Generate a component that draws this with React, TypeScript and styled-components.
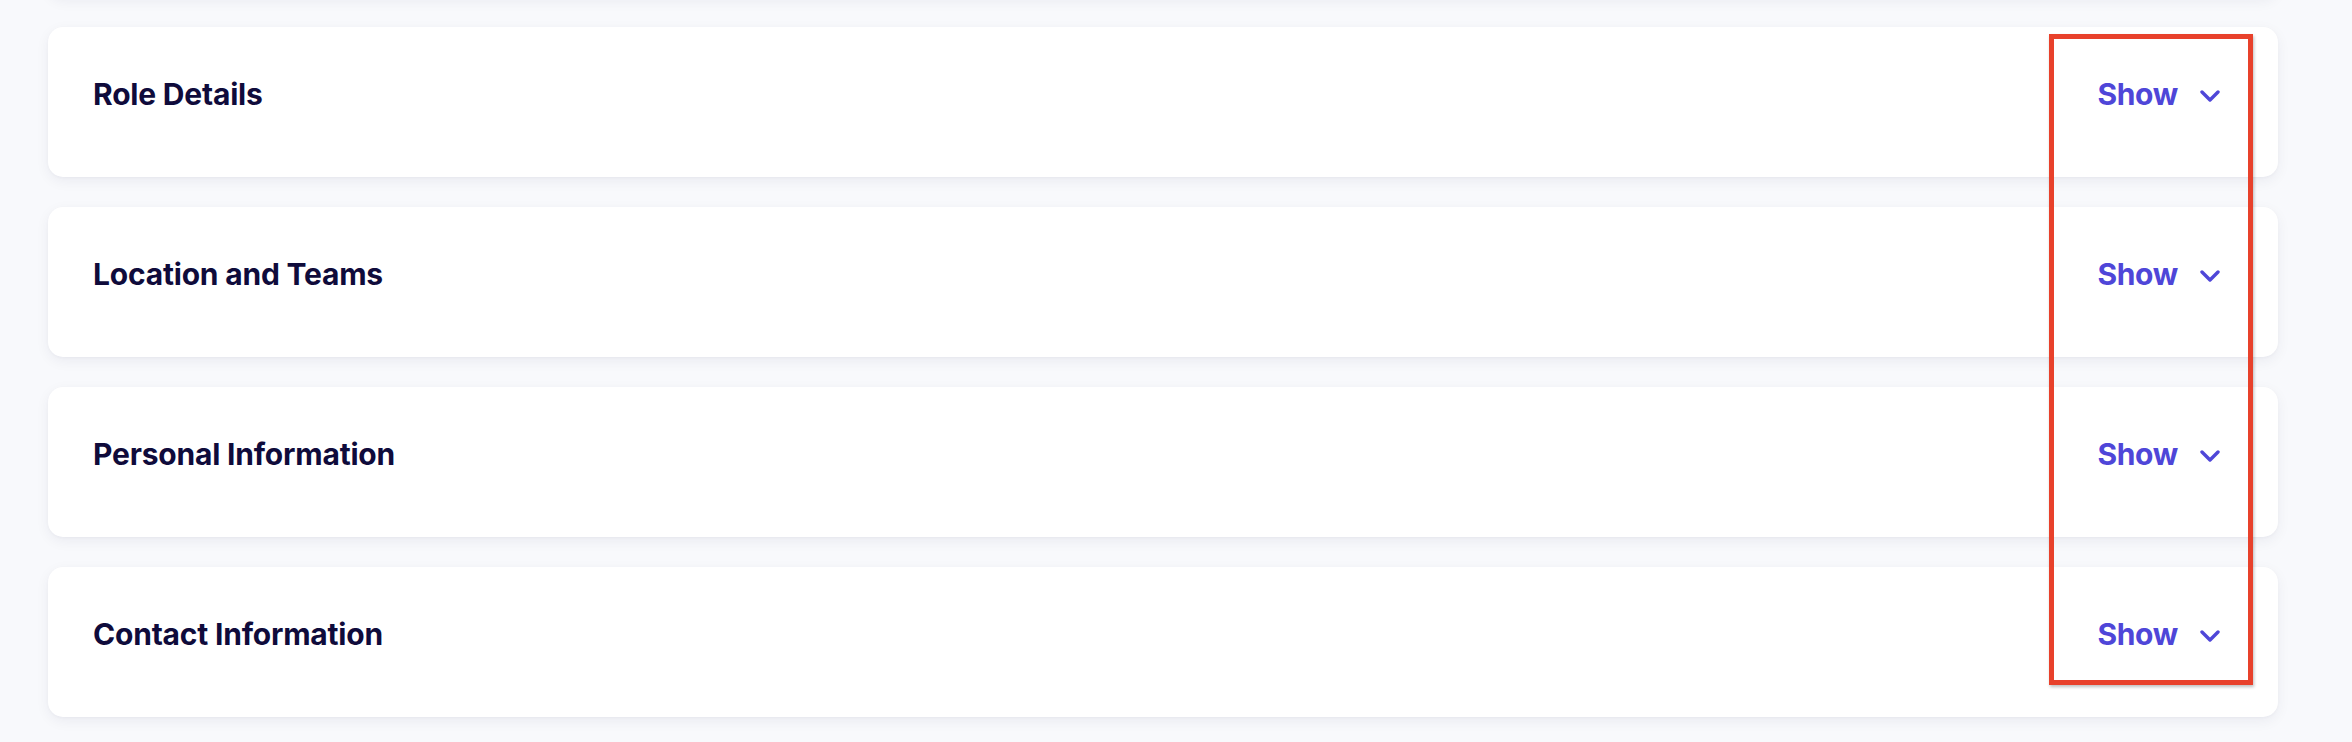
import React from "react";
import styled, { createGlobalStyle } from "styled-components";

const Global = createGlobalStyle`
  html, body { margin: 0; padding: 0; background: #f8f9fc; }
  body { font-family: Inter, "Noto Sans", sans-serif; -webkit-font-smoothing: antialiased; }
  #root { width: 2352px; height: 742px; overflow: hidden; }
`;

const Page = styled.div`
  position: relative;
  width: 2352px;
  height: 742px;
  overflow: hidden;
  background: #f8f9fc;
`;

const List = styled.div`
  display: flex;
  flex-direction: column;
  gap: 30px;
  padding: 0 74px 0 48px;
  margin-top: -33px;
`;

const Card = styled.section<{ $stub?: boolean }>`
  background: #ffffff;
  border-radius: 15px;
  box-shadow: 0 4px 14px rgba(20, 24, 70, 0.06), 0 1px 3px rgba(20, 24, 70, 0.03);
  height: ${(p) => (p.$stub ? "30px" : "150px")};
  display: flex;
  align-items: flex-start;
  justify-content: space-between;
  padding: ${(p) => (p.$stub ? "0" : "0 58px 0 45px")};
  box-sizing: border-box;
`;

const Title = styled.h2`
  margin: 0;
  padding-top: 48px;
  font-size: 30px;
  line-height: 38px;
  font-weight: 700;
  color: #0f0b3b;
  letter-spacing: -0.2px;
`;

const Toggle = styled.button`
  display: flex;
  align-items: center;
  gap: 22px;
  margin-top: 48px;
  padding: 0;
  border: 0;
  background: none;
  font-family: inherit;
  font-size: 30px;
  line-height: 38px;
  font-weight: 700;
  letter-spacing: -0.3px;
  color: #4f46d8;
  cursor: pointer;
`;

const Chevron = styled.svg`
  width: 20px;
  height: 12px;
  margin-top: 4px;
`;

const Highlight = styled.div`
  position: absolute;
  left: 2049px;
  top: 34px;
  width: 204px;
  height: 651px;
  box-sizing: border-box;
  border: 5px solid #e8412b;
  box-shadow: 1px 2px 3px rgba(0, 0, 0, 0.25);
  pointer-events: none;
`;

const sections = ["Role Details", "Location and Teams", "Personal Information", "Contact Information"];

export default function App() {
  return (
    <Page>
      <Global />
      <List>
        <Card $stub />
        {sections.map((s) => (
          <Card key={s}>
            <Title>{s}</Title>
            <Toggle>
              Show
              <Chevron viewBox="0 0 20 12" fill="none">
                <path d="M2 2l8 8 8-8" stroke="#4f46d8" strokeWidth="3.4" strokeLinecap="round" strokeLinejoin="round" />
              </Chevron>
            </Toggle>
          </Card>
        ))}
      </List>
      <Highlight />
    </Page>
  );
}
